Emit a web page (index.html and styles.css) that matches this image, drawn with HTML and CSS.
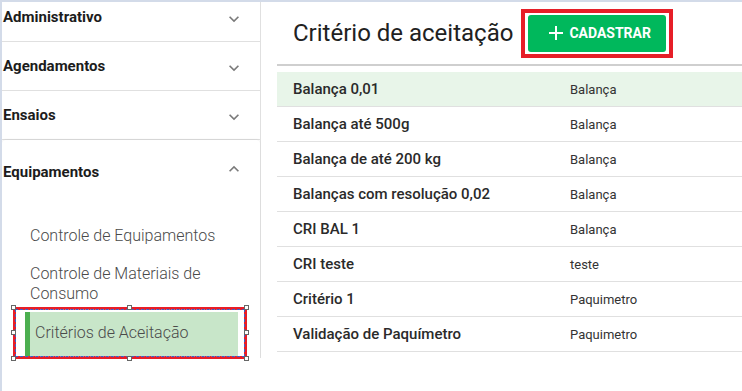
FILE: index.html
```html
<!DOCTYPE html>
<html lang="pt-BR">
<head>
    <meta charset="UTF-8">
    <meta name="viewport" content="width=device-width, initial-scale=1.0">
    <title>Critério de aceitação</title>
    <link rel="stylesheet" href="styles.css">
</head>
<body>
    <div class="page">
        <aside class="sidebar">
            <div class="menu">
                <div class="menu-group">
                    <div class="menu-header">
                        <span>Administrativo</span>
                        <svg class="chevron" viewBox="0 0 24 24"><path d="M16.59 8.59L12 13.17 7.41 8.59 6 10l6 6 6-6z"/></svg>
                    </div>
                </div>
                <div class="menu-group">
                    <div class="menu-header">
                        <span>Agendamentos</span>
                        <svg class="chevron" viewBox="0 0 24 24"><path d="M16.59 8.59L12 13.17 7.41 8.59 6 10l6 6 6-6z"/></svg>
                    </div>
                </div>
                <div class="menu-group">
                    <div class="menu-header">
                        <span>Ensaios</span>
                        <svg class="chevron" viewBox="0 0 24 24"><path d="M16.59 8.59L12 13.17 7.41 8.59 6 10l6 6 6-6z"/></svg>
                    </div>
                </div>
                <div class="menu-group open">
                    <div class="menu-header">
                        <span>Equipamentos</span>
                        <svg class="chevron" viewBox="0 0 24 24"><path d="M12 8l-6 6 1.41 1.41L12 10.83l4.59 4.58L18 14z"/></svg>
                    </div>
                    <ul class="submenu">
                        <li>Controle de Equipamentos</li>
                        <li>Controle de Materiais de Consumo</li>
                        <li class="active">
                            Critérios de Aceitação
                            <!-- selection marker -->
                            <div class="marker">
                                <i class="h tl"></i><i class="h tm"></i><i class="h tr"></i>
                                <i class="h ml"></i><i class="h mr"></i>
                                <i class="h bl"></i><i class="h bm"></i><i class="h br"></i>
                            </div>
                        </li>
                    </ul>
                </div>
            </div>
        </aside>

        <main class="content">
            <div class="content-header">
                <h1>Critério de aceitação</h1>
                <div class="highlight">
                    <button class="btn-add">
                        <svg class="plus" viewBox="0 0 14 14"><path d="M7 0v14M0 7h14"/></svg>
                        CADASTRAR
                    </button>
                </div>
            </div>
            <table class="list">
                <tr class="selected"><td>Balança 0,01</td><td>Balança</td></tr>
                <tr><td>Balança até 500g</td><td>Balança</td></tr>
                <tr><td>Balança de até 200 kg</td><td>Balança</td></tr>
                <tr><td>Balanças com resolução 0,02</td><td>Balança</td></tr>
                <tr><td>CRI BAL 1</td><td>Balança</td></tr>
                <tr><td>CRI teste</td><td>teste</td></tr>
                <tr><td>Critério 1</td><td>Paquimetro</td></tr>
                <tr><td>Validação de Paquímetro</td><td>Paquimetro</td></tr>
            </table>
        </main>
    </div>
</body>
</html>
```

FILE: styles.css
```css
body {
    margin: 0;
    font-family: Roboto, "Liberation Sans", Arial, sans-serif;
    background-color: #fff;
    color: #212121;
}
.page {
    display: flex;
    height: 389px;
    border-top: 2px solid #d3dbe9;
    border-left: 2px solid #d3dbe9;
    overflow: hidden;
}
.sidebar {
    width: 258px;
    flex-shrink: 0;
    align-self: flex-start;
    border-right: 1px solid #e0e0e0;
}
.menu {
    margin-top: -9px;
}
.menu-group {
    border-bottom: 1px solid #e0e0e0;
}
.menu-header {
    display: flex;
    align-items: center;
    justify-content: space-between;
    height: 48px;
    padding: 0 16px 0 1px;
    font-size: 15px;
    font-weight: bold;
    color: #1c1c1c;
}
.chevron {
    width: 20px;
    height: 20px;
    fill: #7a7a7a;
    margin-top: 4px;
}
.menu-group.open {
    border-bottom: none;
    border-radius: 4px 4px 0 0;
    box-shadow: 0 -1px 2px rgba(0, 0, 0, 0.06);
}
.menu-group.open .menu-header {
    height: 64px;
}
.menu-group.open .chevron {
    margin-top: -6px;
}
.submenu {
    list-style: none;
    margin: 0;
    padding: 13px 0 2px;
}
.submenu li {
    margin: 0 22px 0 23px;
    padding: 9px 0;
    border-left: 5px solid transparent;
    font-size: 16px;
    font-weight: 300;
    line-height: 20px;
    color: #4a4a4a;
}
.submenu li.active {
    position: relative;
    margin-top: -1px;
    padding: 11px 0 13px 5px;
    background-color: #c8e6c9;
    border-left-color: #4caf50;
}
.marker {
    position: absolute;
    left: -17px;
    right: -9px;
    top: -5px;
    bottom: -3px;
    border: 3px solid #e61e28;
}
.marker::before {
    content: "";
    position: absolute;
    inset: -1px;
    border: 1px dashed #fff;
    outline: 1px dashed #3b5fc8;
    outline-offset: -1px;
}
.h {
    position: absolute;
    width: 3px;
    height: 3px;
    background-color: #fff;
    border: 1px solid #666;
}
.tl, .tm, .tr { top: -5px; }
.bl, .bm, .br { bottom: -5px; }
.ml, .mr { top: 50%; margin-top: -3px; }
.tl, .ml, .bl { left: -5px; }
.tr, .mr, .br { right: -5px; }
.tm, .bm { left: 50%; margin-left: -3px; }
.content {
    flex: 1;
    padding-left: 16px;
}
.content-header {
    display: flex;
    align-items: center;
    height: 62px;
    padding-left: 16px;
    border-bottom: 2px solid #cfcfcf;
}
.content-header h1 {
    margin: 0;
    font-size: 24px;
    font-weight: normal;
    color: #212121;
}
.highlight {
    margin-left: 8px;
    padding: 2px 3px;
    border: 4px solid #e61e28;
}
.btn-add {
    display: flex;
    align-items: center;
    gap: 6px;
    width: 138px;
    height: 37px;
    padding: 0 0 0 21px;
    border: none;
    border-radius: 3px;
    background-color: #00b85c;
    color: #fff;
    font-family: Roboto, "Liberation Sans", Arial, sans-serif;
    font-size: 14px;
    font-weight: bold;
}
.plus {
    width: 14px;
    height: 14px;
    stroke: #fff;
    stroke-width: 2;
}
.list {
    width: 100%;
    margin-top: 6px;
    border-collapse: collapse;
    table-layout: fixed;
}
.list td {
    height: 34px;
    padding: 0 0 0 16px;
    border-bottom: 1px solid #e0e0e0;
    font-size: 13px;
    color: #333;
}
.list td:first-child {
    width: 261px;
    font-size: 15px;
    font-weight: 500;
    color: #2a2a2a;
}
.list tr.selected {
    background-color: #e8f5e9;
}
```
